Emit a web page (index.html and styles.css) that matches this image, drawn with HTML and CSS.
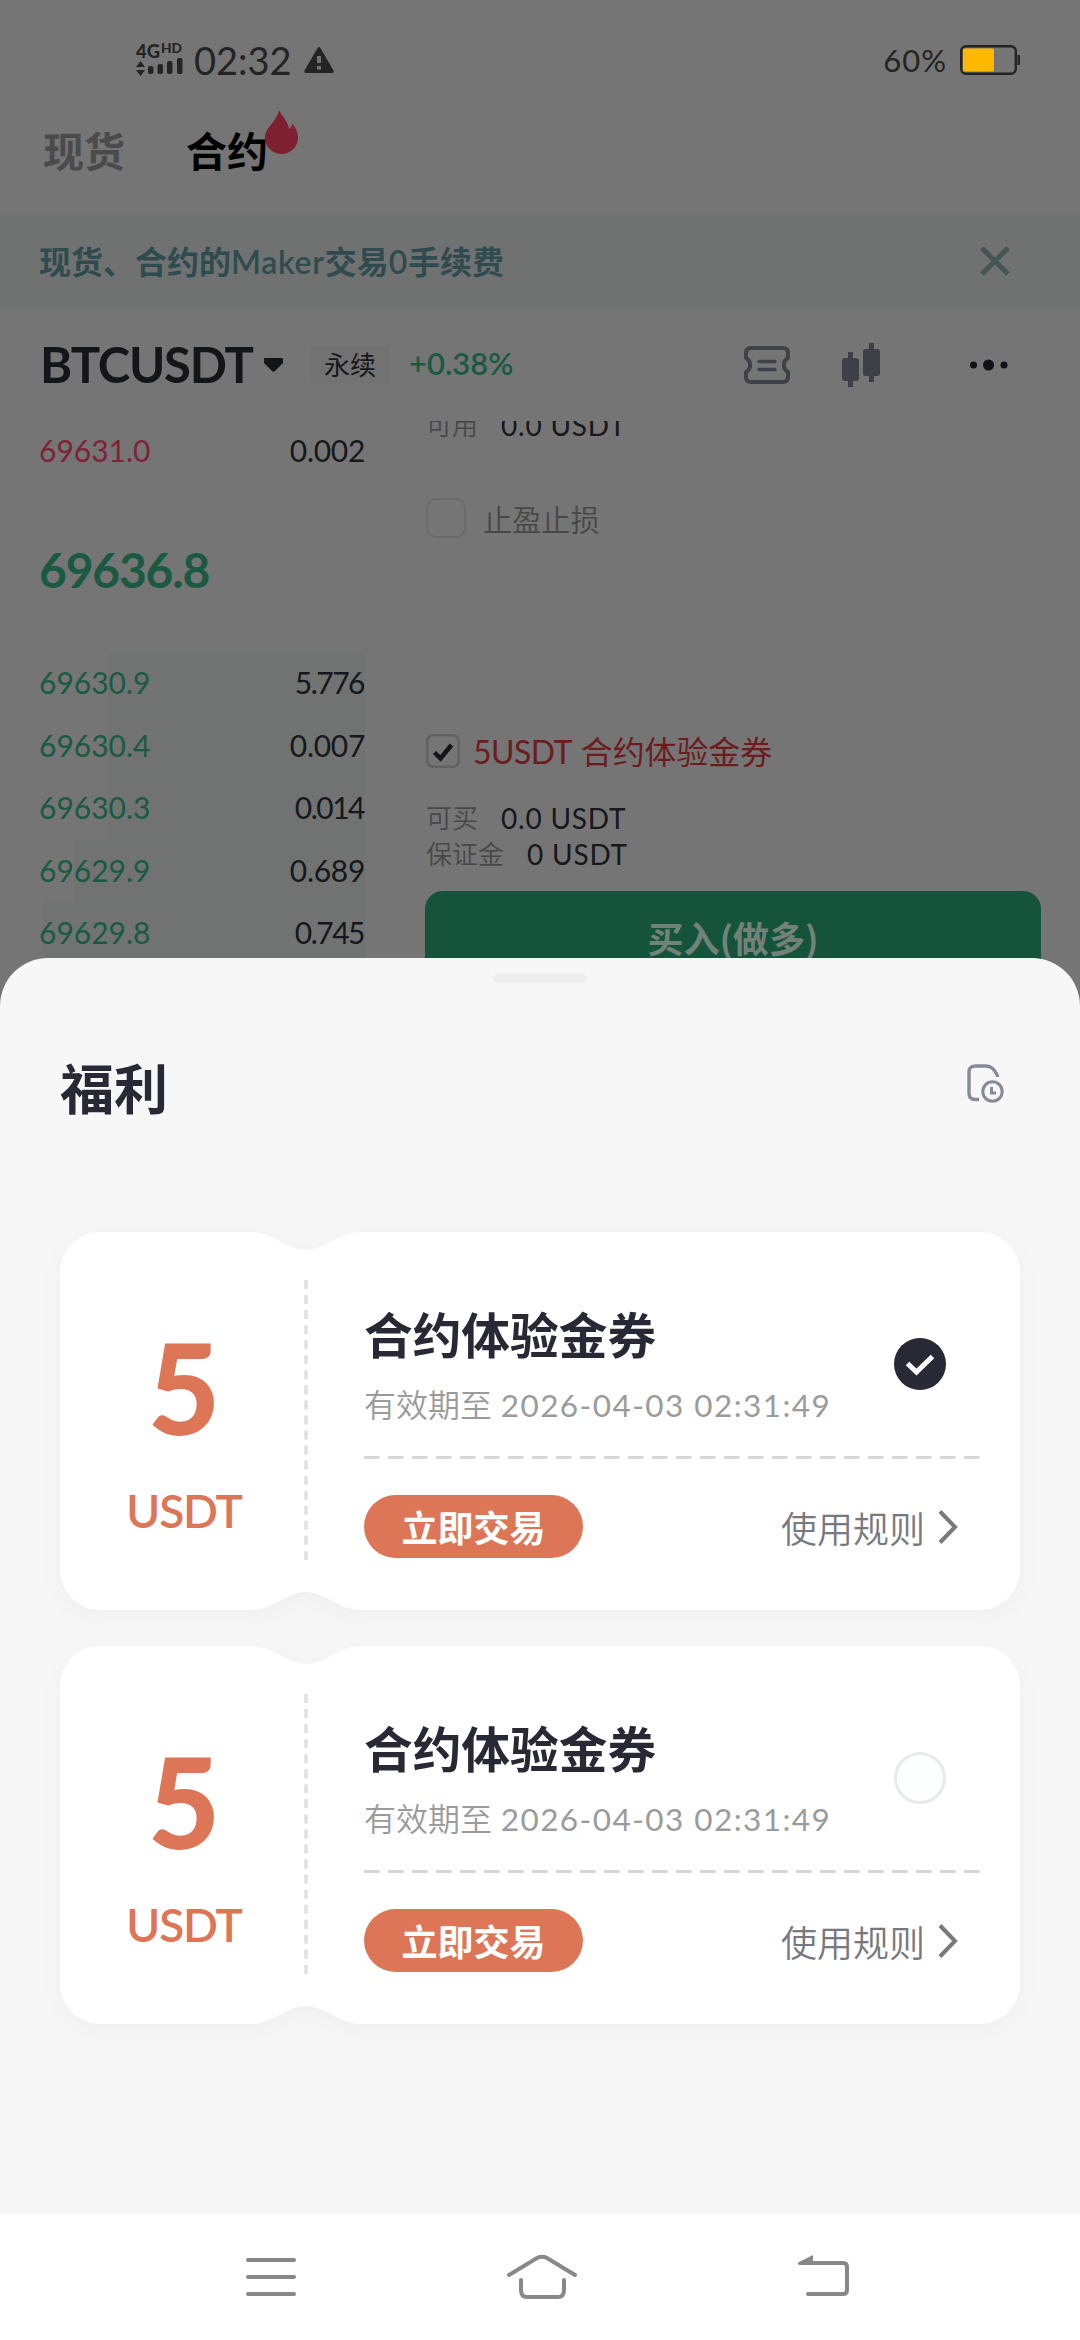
FILE: index.html
```html
<!DOCTYPE html>
<html lang="zh-CN">
<head>
<meta charset="utf-8">
<title>福利</title>
<link rel="stylesheet" href="styles.css">
</head>
<body>
<svg class="defs" width="0" height="0">
  <symbol id="ticket-shape" viewBox="0 0 960 378">
    <path d="M40 0H190C214 0 226 18 246 18S278 0 302 0H920A40 40 0 0 1 960 40V338A40 40 0 0 1 920 378H302C278 378 266 360 246 360S214 378 190 378H40A40 40 0 0 1 0 338V40A40 40 0 0 1 40 0Z" fill="#fff"/>
    <path d="M246 48V328" stroke="#e0e0e0" stroke-width="3.5" stroke-dasharray="9 6.05"/>
  </symbol>
</svg>
<div class="phone">
  <div class="app">
    <header class="status">
      <svg class="signal" width="48" height="34" viewBox="0 0 48 34">
        <text class="net" x="0" y="15" textLength="24" lengthAdjust="spacingAndGlyphs">4G</text>
        <text class="hd" x="25" y="10" textLength="21" lengthAdjust="spacingAndGlyphs">HD</text>
        <g fill="#242424"><path d="M0 24L4.500 18L9 24ZM0 27H9L4.500 33Z"/><rect x="12" y="23" width="5.500" height="8" rx="2"/><rect x="21.500" y="21" width="5.500" height="10" rx="2"/><rect x="31" y="18" width="5.500" height="13" rx="2"/><rect x="41" y="15" width="5.500" height="16" rx="2"/></g>
      </svg>
      <span class="clock">02:32</span>
      <svg class="warn" width="30" height="26" viewBox="0 0 30 26"><path d="M15 0Q16 0 17 2L29.500 23.500Q30 26 28 26H2Q0 26 .5 23.500L13 2Q14 0 15 0Z" fill="#242424"/><path d="M15 9V16M15 19V22.500" stroke="#757575" stroke-width="4"/></svg>
      <span class="percent">60%</span>
      <svg class="battery" width="60" height="30" viewBox="0 0 60 30"><rect x="1.200" y="1.200" width="54.600" height="27.600" rx="5" fill="none" stroke="#242424" stroke-width="2.400"/><rect x="3" y="3.500" width="31" height="23" rx="1.500" fill="#ffb800"/><path d="M57.500 10H60V20H57.500Z" fill="#242424"/></svg>
    </header>
    <nav class="tabs">
      <span class="tab">现货</span>
      <span class="tab active">合约
        <svg class="flame" width="33" height="44" viewBox="0 0 33 44"><path d="M14 0C16 5 23 11 24 19C26 18 27 16 27 14C31 17 33 23 33 28A16.500 16 0 0 1 0 28C0 17 12 12 14 0Z" fill="#7e202f"/></svg>
      </span>
    </nav>
    <div class="banner">
      <span class="banner-text">现货、合约的<b>Maker</b>交易<b>0</b>手续费</span>
      <svg width="30" height="30" viewBox="0 0 30 30"><path d="M2 2L28 28M28 2L2 28" stroke="#445553" stroke-width="5"/></svg>
    </div>
    <div class="pair">
      <span class="symbol">BTCUSDT</span>
      <svg class="caret" width="19" height="14" viewBox="0 0 19 14"><path d="M1 0H18Q19 0 19 1V5L11 13Q9.500 14 8 13L0 5V1Q0 0 1 0Z" fill="#14141b"/></svg>
      <span class="tag">永续</span>
      <span class="change">+0.38%</span>
      <svg class="i-ticket" width="46" height="38" viewBox="0 0 46 38" fill="none" stroke="#3c4248" stroke-width="4" stroke-linecap="round"><path d="M7 2H39Q44 2 44 7V12A8 8 0 0 0 44 26V31Q44 36 39 36H7Q2 36 2 31V26A8 8 0 0 0 2 12V7Q2 2 7 2Z" stroke-linejoin="round"/><path d="M15 15.500H31M15 23.500H31" stroke-width="3.400"/></svg>
      <svg class="i-candle" width="38" height="44" viewBox="0 0 38 44" fill="#3e4049"><rect y="15" width="17" height="23" rx="3"/><rect x="6" y="9" width="5" height="35"/><rect x="21" y="6" width="17" height="27" rx="3"/><rect x="27" width="5" height="39"/></svg>
      <svg class="i-more" width="38" height="12" viewBox="0 0 38 12" fill="#111118"><circle cx="3.500" cy="6" r="3.500"/><circle cx="18.500" cy="6" r="5.500"/><circle cx="34" cy="6" r="3.500"/></svg>
    </div>
    <main class="trade">
      <section class="book">
        <div class="row ask"><span class="p">69631.0</span><span class="q">0.002</span></div>
        <div class="last">69636.8</div>
        <div class="row bid d1"><span class="p">69630.9</span><span class="q narrow">5.776</span></div>
        <div class="row bid d1"><span class="p">69630.4</span><span class="q">0.007</span></div>
        <div class="row bid d1"><span class="p">69630.3</span><span class="q narrow">0.014</span></div>
        <div class="row bid d2"><span class="p">69629.9</span><span class="q">0.689</span></div>
        <div class="row bid d3"><span class="p">69629.8</span><span class="q narrow">0.745</span></div>
      </section>
      <section class="form">
        <div class="info clipped"><span>可用</span><b>0.0 USDT</b></div>
        <div class="tpsl"><i class="box"></i><span>止盈止损</span></div>
        <div class="coupon-line">
          <svg width="34" height="34" viewBox="0 0 34 34"><rect x="1.250" y="1.250" width="31.500" height="31.500" rx="6" fill="none" stroke="#616162" stroke-width="2.500"/><path d="M8.500 18.500L14.500 24.500L25.500 11" fill="none" stroke="#14141d" stroke-width="4.500"/></svg>
          <span><b>5USDT</b>合约体验金券</span>
        </div>
        <div class="info first"><span>可买</span><b>0.0 USDT</b></div>
        <div class="info"><span>保证金</span><b>0 USDT</b></div>
        <div class="buy">买入(做多)</div>
      </section>
    </main>
  </div>

  <section class="sheet">
    <div class="handle"></div>
    <div class="sheet-head">
      <h1>福利</h1>
      <svg width="37" height="39" viewBox="0 0 37 39" fill="none" stroke="#858b99" stroke-width="3.400"><path d="M12 35.500H8.500Q2 35.500 2 29V8Q2 2 8.500 2H18Q24 2 27 6Q30 10 31 13"/><circle cx="25.500" cy="27.500" r="9.700" stroke-width="3"/><path d="M24.500 23V29H29" stroke-width="3"/></svg>
    </div>
    <article class="card">
      <svg class="card-bg" width="960" height="378"><use href="#ticket-shape"/></svg>
      <div class="amount"><strong>5</strong><span>USDT</span></div>
      <div class="detail">
        <div class="summary">
          <div><h2>合约体验金券</h2><p>有效期至 <time>2026-04-03 02:31:49</time></p></div>
          <svg class="radio" width="52" height="52" viewBox="0 0 52 52"><circle cx="26" cy="26" r="26" fill="#272a35"/><path d="M13.500 25.500L22.500 34L38.500 18.500" fill="none" stroke="#fff" stroke-width="5"/></svg>
        </div>
        <svg class="rule" width="616" height="3"><path d="M0 1.500H616" stroke="#d6d6d6" stroke-width="3" stroke-dasharray="15.500 8.500"/></svg>
        <div class="actions"><span class="go">立即交易</span><span class="rules">使用规则</span><svg width="20" height="34" viewBox="0 0 20 34"><path d="M2 1.500L17 17L2 32.500" fill="none" stroke="#77797e" stroke-width="4"/></svg></div>
      </div>
    </article>
    <article class="card">
      <svg class="card-bg" width="960" height="378"><use href="#ticket-shape"/></svg>
      <div class="amount"><strong>5</strong><span>USDT</span></div>
      <div class="detail">
        <div class="summary">
          <div><h2>合约体验金券</h2><p>有效期至 <time>2026-04-03 02:31:49</time></p></div>
          <svg class="radio" width="52" height="52" viewBox="0 0 52 52"><circle cx="26" cy="26" r="24.500" fill="#fdfffe" stroke="#e6ebea" stroke-width="3"/></svg>
        </div>
        <svg class="rule" width="616" height="3"><path d="M0 1.500H616" stroke="#d6d6d6" stroke-width="3" stroke-dasharray="15.500 8.500"/></svg>
        <div class="actions"><span class="go">立即交易</span><span class="rules">使用规则</span><svg width="20" height="34" viewBox="0 0 20 34"><path d="M2 1.500L17 17L2 32.500" fill="none" stroke="#77797e" stroke-width="4"/></svg></div>
      </div>
    </article>
  </section>

  <footer class="system-nav">
    <svg width="50" height="44" viewBox="0 0 50 44"><path d="M2 5H48M2 22H48M2 39H48" stroke="#888" stroke-width="4" stroke-linecap="round"/></svg>
    <svg class="home" width="70" height="46" viewBox="0 0 70 46" fill="none" stroke="#888" stroke-width="4" stroke-linecap="round"><path d="M2 21L30 4Q35 1.500 40 4L68 21"/><path d="M14 26V36Q14 43 20 43H51Q57 43 57 36V26"/></svg>
    <svg width="51" height="44" viewBox="0 0 51 44"><path d="M4 8H45Q49 8 49 12V35Q49 39 45 39H10" fill="none" stroke="#888" stroke-width="4" stroke-linecap="round"/><path d="M15 0V10H1Q-1 8 1 7Z" fill="#888"/></svg>
  </footer>
</div>
</body>
</html>
```
FILE: styles.css
```css
* { box-sizing: border-box; }
body { margin: 0; font-family: Lato, "Noto Sans CJK SC", sans-serif; font-variant-ligatures: none; }
svg { display: block; flex: none; overflow: visible; }
h1, h2, p { margin: 0; }
.defs { position: absolute; }
.phone { width: 1080px; height: 2340px; overflow: hidden; background: #757575; display: flex; flex-direction: column; white-space: nowrap; }
.app { height: 1010px; flex: none; overflow: hidden; display: flex; flex-direction: column; color: #17171c; }

.status { height: 88px; padding: 32px 60px 0 136px; display: flex; align-items: center; color: #242424; }
.signal { margin-top: -1px; }
.net { font: 900 19px Lato, sans-serif; fill: #242424; }
.hd { font: 900 14px Lato, sans-serif; fill: #242424; }
.clock { margin-left: 10px; width: 110px; font-size: 38px; line-height: 56px; }
.percent { margin-left: auto; margin-right: 13px; font-size: 31px; line-height: 56px; letter-spacing: 1px; }

.tabs { height: 126px; padding: 0 0 4px 43px; display: flex; align-items: center; gap: 61px; font-size: 41px; line-height: 60px; }
.tab { position: relative; color: #4b4b4b; font-family: "Noto Sans CJK SC", sans-serif; font-weight: 700; }
.tab.active { color: #000; }
.flame { position: absolute; left: 79px; top: -9px; }

.banner { height: 94px; padding: 0 70px 0 39px; display: flex; align-items: center; justify-content: space-between; background: #6f7271; color: #304b4f; font-size: 32px; font-weight: 700; }
.banner-text { margin-top: -2px; font-family: "Noto Sans CJK SC", sans-serif; }
.banner b { font-family: Lato, sans-serif; font-weight: 600; letter-spacing: .7px; }

.pair { height: 113px; padding-left: 40px; display: flex; align-items: center; }
.symbol { width: 224px; font-size: 49px; font-weight: 700; color: #14141b; letter-spacing: -1.2px; margin-top: -2px; }
.tag { margin-left: 27px; width: 80px; height: 36px; background: #727272; border-radius: 4px; font-size: 26px; line-height: 36px; text-align: center; }
.change { margin-left: 19px; width: 102px; margin-top: -4px; font-size: 31px; color: #195a41; font-weight: 600; }
.i-ticket { margin-left: 233px; }
.i-candle { margin-left: 52px; }
.i-more { margin-left: 90px; }

.trade { flex: 1; min-height: 0; overflow: hidden; display: flex; padding-left: 39px; }
.book { width: 326px; flex: none; }
.row { height: 62.5px; padding-bottom: 2px; display: flex; align-items: center; justify-content: space-between; font-size: 30px; }
.row.ask { height: 60px; }
.q { letter-spacing: -.3px; }
.q.narrow { letter-spacing: -1.5px; padding-right: 1px; }
.ask .p { color: #7e2336; }
.bid .p { color: #195a41; }
.d1 { background: linear-gradient(#707372, #707372) right / 257px 100% no-repeat; }
.d2 { background: linear-gradient(#707372, #707372) right / 290px 100% no-repeat; }
.d3 { background: linear-gradient(#707372, #707372) right / 322px 100% no-repeat; }
.last { height: 171px; line-height: 177px; font-size: 48px; font-weight: 700; color: #195a41; letter-spacing: -1.2px; }

.form { margin-left: 60px; width: 616px; flex: none; }
.info { height: 36px; padding: 0 0 2px 1px; display: flex; align-items: center; gap: 23px; font-size: 28px; line-height: 34px; }
.info span { font-size: 26px; font-weight: 350; color: #484848; }
.info b { font-weight: 400; letter-spacing: .8px; }
.clipped { margin-top: -13px; }
.first { margin-top: 33px; }
.tpsl { margin-top: 54px; height: 40px; padding-left: 1px; display: flex; align-items: center; gap: 17px; font-size: 29.2px; font-weight: 350; color: #474747; }
.box { width: 40px; height: 40px; border: 2px solid #6a6a6a; border-radius: 10px; }
.coupon-line { margin-top: 196px; height: 34px; padding-left: 1px; display: flex; align-items: center; gap: 13px; font-size: 31.9px; line-height: 34px; color: #6d1c1e; }
.coupon-line span { padding-top: 2px; }
.coupon-line b { font-weight: 400; margin-right: 9px; letter-spacing: -.5px; }
.buy { margin-top: 18px; height: 94px; border-radius: 18px; background: #15543b; color: #738279; font-size: 36px; font-weight: 700; line-height: 93px; text-align: center; font-family: "Noto Sans CJK SC", sans-serif; }

.sheet { position: relative; margin-top: -52px; height: 1256px; flex: none; padding: 15px 60px 0; border-radius: 48px 48px 0 0; background: #f7f7f7; }
.handle { width: 94px; height: 10px; margin: 0 auto; border-radius: 5px; background: #ededed; }
.sheet-head { height: 200px; margin-bottom: 49px; padding-right: 16px; display: flex; align-items: center; justify-content: space-between; }
.sheet-head h1 { padding-top: 7px; font-size: 54px; line-height: 80px; font-weight: 700; color: #272a35; font-family: "Noto Sans CJK SC", sans-serif; }
.card { position: relative; height: 378px; margin-bottom: 36px; display: flex; }
.card-bg { position: absolute; inset: 0; filter: drop-shadow(0 6px 10px rgba(0,0,0,.035)); }
.amount { position: relative; width: 246px; padding: 83px 0 0 2px; display: flex; flex-direction: column; align-items: center; color: #dc7657; }
.amount strong { font-size: 125px; line-height: 144px; font-weight: 900; }
.amount span { margin-top: 24px; font-size: 46px; line-height: 56px; font-weight: 600; letter-spacing: -1.2px; }
.detail { position: relative; padding-left: 58px; width: 714px; }
.summary { height: 224px; padding: 68px 74px 0 0; display: flex; justify-content: space-between; }
.summary h2 { margin-top: -2px; font-size: 48.7px; line-height: 70px; font-weight: 700; color: #272a35; font-family: "Noto Sans CJK SC", sans-serif; }
.summary p { margin-top: 2px; font-size: 32px; line-height: 70px; font-weight: 350; color: #9b9b9b; }
.summary time { font-weight: 400; font-size: 31.5px; letter-spacing: 1.45px; }
.radio { margin-top: 38px; }
.actions { height: 63px; margin-top: 36px; padding-right: 62px; display: flex; align-items: center; font-family: "Noto Sans CJK SC", sans-serif; }
.go { width: 219px; height: 63px; border-radius: 32px; background: #dc7657; color: #fff; font-size: 36px; line-height: 63px; font-weight: 700; text-align: center; }
.rules { margin-left: auto; margin-right: 13px; font-size: 36px; color: #77797e; font-weight: 350; }

.system-nav { flex: 1; padding: 0 231px 0 246px; display: flex; align-items: center; justify-content: space-between; background: #fff; }
.home { margin: 0 10px 0 0; }
```
